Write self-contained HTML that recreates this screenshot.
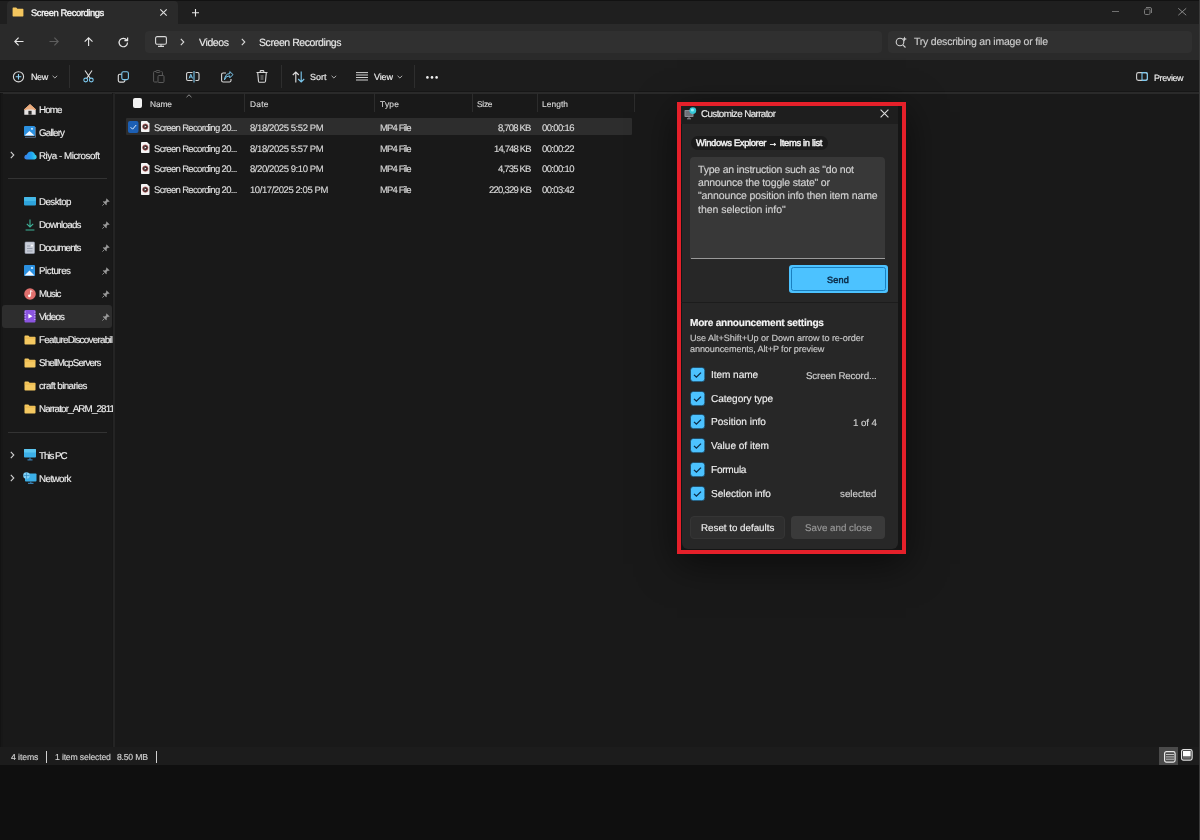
<!DOCTYPE html>
<html><head><meta charset="utf-8">
<style>
*{margin:0;padding:0;box-sizing:border-box}
html,body{width:1200px;height:840px;overflow:hidden;background:#0f0f0f}
body{font-family:"Liberation Sans",sans-serif;color:#e6e6e6;position:relative}
.a{position:absolute}
.t{position:absolute;white-space:nowrap;line-height:1;will-change:transform;text-rendering:geometricPrecision;-webkit-text-stroke:0.15px currentColor}
svg{position:absolute;overflow:visible}
</style></head>
<body>

<div class="a" style="left:0px;top:0px;width:1199px;height:765px;background:#191919;"></div>
<div class="a" style="left:0px;top:0px;width:1199px;height:24px;background:#1f1f1f;"></div>
<div class="a" style="left:0px;top:0px;width:1200px;height:1px;background:#121212;"></div>
<div class="a" style="left:7px;top:1px;width:171px;height:24px;background:#2a2a2a;border-radius:4px 4px 0 0"></div>
<div class="a" style="left:0px;top:24px;width:1199px;height:36px;background:#2a2a2a;"></div>
<div class="a" style="left:145px;top:30.5px;width:737px;height:22.5px;background:#303030;border-radius:4px"></div>
<div class="a" style="left:888px;top:31px;width:304px;height:21.5px;background:#303030;border-radius:4px"></div>
<div class="a" style="left:0px;top:60px;width:1199px;height:32px;background:#1c1c1c;"></div>
<div class="a" style="left:0px;top:91px;width:1199px;height:1px;background:#161616;"></div>
<div class="a" style="left:0px;top:92px;width:1199px;height:1.6px;background:#2a2a2a;"></div>
<div class="a" style="left:112px;top:93px;width:1px;height:654px;background:#171717;"></div>
<div class="a" style="left:113px;top:93px;width:2px;height:654px;background:#242424;"></div>
<div class="a" style="left:0px;top:93px;width:1px;height:654px;background:#131313;"></div>
<div class="a" style="left:1px;top:93px;width:2px;height:654px;background:#171717;"></div>
<div class="a" style="left:0px;top:747px;width:1199px;height:18px;background:#1c1c1c;"></div>
<div class="a" style="left:1199px;top:0px;width:1px;height:840px;background:#3a3a3a;"></div>
<svg style="left:12px;top:7px;" width="12" height="10" viewBox="0 0 12 10"><path d="M0.6 1.2 Q0.6 0.6 1.2 0.6 H4.2 L5.4 1.8 H10.8 Q11.4 1.8 11.4 2.4 V9 Q11.4 9.4 10.8 9.4 H1.2 Q0.6 9.4 0.6 9 Z" fill="#f4c65e"/></svg>
<div class="t" style="left:31.00px;top:8px;font-size:9.4px;color:#f4f4f4;letter-spacing:-0.403px;-webkit-text-stroke:0.35px #f4f4f4;">Screen Recordings</div>
<svg style="left:160px;top:9px;" width="7" height="7" viewBox="0 0 7 7"><path d="M0.3 0.3 L6.7 6.7 M6.7 0.3 L0.3 6.7" stroke="#e0e0e0" stroke-width="1.1"/></svg>
<svg style="left:192px;top:9px;" width="7" height="7" viewBox="0 0 7 7"><path d="M3.5 0 V7.5 M0 3.7 H7" stroke="#e8e8e8" stroke-width="1.1"/></svg>
<div class="a" style="left:1111.5px;top:10.5px;width:7.5px;height:1px;background:#707070;"></div>
<svg style="left:1144px;top:7px;" width="8" height="8" viewBox="0 0 8 8"><rect x="0.5" y="2" width="5.5" height="5.5" rx="1.3" fill="none" stroke="#7a7a7a" stroke-width="1"/><path d="M2 0.5 H6 Q7.5 0.5 7.5 2 V6" fill="none" stroke="#7a7a7a" stroke-width="1"/></svg>
<svg style="left:1178px;top:7.5px;" width="8.5" height="7.5" viewBox="0 0 8.5 7.5"><path d="M0.3 0.3 L8.2 7.2 M8.2 0.3 L0.3 7.2" stroke="#888" stroke-width="1"/></svg>
<svg style="left:14px;top:37px;" width="10" height="9" viewBox="0 0 10 9"><path d="M9.5 4.5 H0.8 M4.6 0.6 L0.8 4.5 L4.6 8.4" fill="none" stroke="#e8e8e8" stroke-width="1.1"/></svg>
<svg style="left:49px;top:37px;" width="10" height="9" viewBox="0 0 10 9"><path d="M0.5 4.5 H9.2 M5.4 0.6 L9.2 4.5 L5.4 8.4" fill="none" stroke="#5e5e5e" stroke-width="1.1"/></svg>
<svg style="left:84px;top:37px;" width="10" height="9" viewBox="0 0 10 9"><path d="M4.6 9 V0.8 M0.7 4.6 L4.6 0.8 L8.5 4.6" fill="none" stroke="#e8e8e8" stroke-width="1.1"/></svg>
<svg style="left:118px;top:37px;" width="11" height="10" viewBox="0 0 11 10"><path d="M8.8 3.2 A4.2 4.2 0 1 0 9.5 5.5" fill="none" stroke="#e8e8e8" stroke-width="1.2"/><path d="M9.6 0.5 V3.6 H6.4" fill="none" stroke="#e8e8e8" stroke-width="1.2"/></svg>
<svg style="left:155px;top:36px;" width="12" height="11" viewBox="0 0 12 11"><rect x="0.6" y="0.6" width="10.8" height="7.6" rx="1.5" fill="none" stroke="#d8d8d8" stroke-width="1.1"/><path d="M3 10.4 H9 M6 8.2 V10.4" stroke="#d8d8d8" stroke-width="1.1"/></svg>
<svg style="left:180px;top:38px;" width="5" height="8" viewBox="0 0 5 8"><path d="M0.8 0.8 L3.8 4 L0.8 7.2" fill="none" stroke="#d8d8d8" stroke-width="1.1"/></svg>
<div class="t" style="left:198.50px;top:38px;font-size:10.5px;color:#e8e8e8;letter-spacing:-0.383px;">Videos</div>
<svg style="left:241px;top:38px;" width="5" height="8" viewBox="0 0 5 8"><path d="M0.8 0.8 L3.8 4 L0.8 7.2" fill="none" stroke="#d8d8d8" stroke-width="1.1"/></svg>
<div class="t" style="left:258.50px;top:38px;font-size:10.5px;color:#e8e8e8;letter-spacing:-0.425px;">Screen Recordings</div>
<svg style="left:895px;top:36px;" width="13" height="12" viewBox="0 0 13 12"><circle cx="5" cy="6" r="3.8" fill="none" stroke="#d0d0d0" stroke-width="1.1"/><path d="M7.8 8.8 L10.5 11.5" stroke="#d0d0d0" stroke-width="1.1"/><path d="M9.5 0.5 L10.2 2.3 L12 3 L10.2 3.7 L9.5 5.5 L8.8 3.7 L7 3 L8.8 2.3 Z" fill="#d0d0d0"/></svg>
<div class="t" style="left:914.00px;top:37px;font-size:10.5px;color:#cccccc;letter-spacing:-0.208px;">Try describing an image or file</div>
<svg style="left:12px;top:71px;" width="13" height="12" viewBox="0 0 13 12"><circle cx="6.5" cy="5.8" r="5.1" fill="none" stroke="#d8d8d8" stroke-width="1.1"/><path d="M6.5 3 V8.6 M3.7 5.8 H9.3" stroke="#8fd3f5" stroke-width="1.1"/></svg>
<div class="t" style="left:30.70px;top:73px;font-size:9.0px;color:#eeeeee;letter-spacing:-0.402px;">New</div>
<svg style="left:52px;top:75px;" width="6" height="4" viewBox="0 0 6 4"><path d="M0.6 0.8 L2.9 3 L5.2 0.8" fill="none" stroke="#bbb" stroke-width="0.9"/></svg>
<div class="a" style="left:69px;top:65px;width:1px;height:23px;background:#2e2e2e;"></div>
<svg style="left:83px;top:70px;" width="11" height="13" viewBox="0 0 11 13"><path d="M2 0.5 L7.2 8.2 M9 0.5 L3.8 8.2" stroke="#e0e0e0" stroke-width="1.1"/><circle cx="2.7" cy="10" r="1.9" fill="none" stroke="#7cc8ee" stroke-width="1.1"/><circle cx="8.3" cy="10" r="1.9" fill="none" stroke="#7cc8ee" stroke-width="1.1"/></svg>
<svg style="left:117px;top:71px;" width="13" height="12" viewBox="0 0 13 12"><rect x="1.3" y="3.3" width="6.6" height="7.8" rx="1.5" fill="none" stroke="#e0e0e0" stroke-width="1.1"/><rect x="4.8" y="0.8" width="6.6" height="7.8" rx="1.5" fill="#1c1c1c" stroke="#7cc8ee" stroke-width="1.1"/></svg>
<svg style="left:153px;top:70px;" width="12" height="13" viewBox="0 0 12 13"><path d="M3 1.5 H1.5 Q0.6 1.5 0.6 2.5 V11 Q0.6 12 1.5 12 H4.5" fill="none" stroke="#5a5a5a" stroke-width="1"/><rect x="3" y="0.5" width="4" height="2" rx="0.8" fill="none" stroke="#5a5a5a" stroke-width="0.9"/><path d="M8.5 1.5 Q9.4 1.5 9.4 2.5 V5" fill="none" stroke="#5a5a5a" stroke-width="1"/><rect x="5" y="5.5" width="6" height="7" rx="1" fill="none" stroke="#5a5a5a" stroke-width="1"/></svg>
<svg style="left:186px;top:71px;" width="14" height="12" viewBox="0 0 14 12"><path d="M6.5 1.5 H2 Q0.6 1.5 0.6 3 V8 Q0.6 9.5 2 9.5 H6.5" fill="none" stroke="#d8d8d8" stroke-width="1.1"/><path d="M9.5 1.5 H11.5 Q13 1.5 13 3 V8 Q13 9.5 11.5 9.5 H9.5" fill="none" stroke="#d8d8d8" stroke-width="1.1"/><path d="M8 0 V11.5" stroke="#7cc8ee" stroke-width="1.1"/><path d="M3 7.5 L4.8 3.3 L6.6 7.5 M3.7 6 H5.9" fill="none" stroke="#7cc8ee" stroke-width="1"/></svg>
<svg style="left:221px;top:71px;" width="13" height="12" viewBox="0 0 13 12"><path d="M5 2 H2.2 Q0.6 2 0.6 3.6 V9.4 Q0.6 11 2.2 11 H8.4 Q10 11 10 9.4 V8" fill="none" stroke="#d8d8d8" stroke-width="1.1"/><path d="M3.5 8.8 Q4.5 4.8 8.8 4.8 V6.8 L12 3.6 L8.8 0.6 V2.6 Q4 2.8 3.5 8.8 Z" fill="none" stroke="#7cc8ee" stroke-width="1"/></svg>
<svg style="left:256px;top:70px;" width="12" height="13" viewBox="0 0 12 13"><path d="M0.5 2.5 H11.5 M4.2 2.5 V1.3 Q4.2 0.6 5 0.6 H7 Q7.8 0.6 7.8 1.3 V2.5 M1.7 2.5 L2.5 11.3 Q2.6 12.3 3.6 12.3 H8.4 Q9.4 12.3 9.5 11.3 L10.3 2.5" fill="none" stroke="#d8d8d8" stroke-width="1.1"/><rect x="4.5" y="5" width="3" height="5" fill="#555"/></svg>
<div class="a" style="left:281px;top:65px;width:1px;height:23px;background:#2e2e2e;"></div>
<svg style="left:292px;top:71px;" width="13" height="12" viewBox="0 0 13 12"><path d="M3.8 11.5 V1 M0.8 4 L3.8 1 L6.8 4" fill="none" stroke="#e0e0e0" stroke-width="1.1"/><path d="M9.2 0.5 V11 M6.2 8 L9.2 11 L12.2 8" fill="none" stroke="#7cc8ee" stroke-width="1.1"/></svg>
<div class="t" style="left:310.00px;top:73px;font-size:9.0px;color:#eeeeee;letter-spacing:-0.002px;">Sort</div>
<svg style="left:331px;top:75px;" width="6" height="4" viewBox="0 0 6 4"><path d="M0.6 0.8 L2.9 3 L5.2 0.8" fill="none" stroke="#bbb" stroke-width="0.9"/></svg>
<svg style="left:356px;top:72px;" width="12" height="9" viewBox="0 0 12 9"><path d="M0 0.6 H12 M0 3 H12 M0 5.5 H12 M0 8 H12" stroke="#d0d0d0" stroke-width="1"/></svg>
<div class="t" style="left:373.75px;top:73px;font-size:9.0px;color:#eeeeee;letter-spacing:-0.115px;">View</div>
<svg style="left:397px;top:75px;" width="6" height="4" viewBox="0 0 6 4"><path d="M0.6 0.8 L2.9 3 L5.2 0.8" fill="none" stroke="#bbb" stroke-width="0.9"/></svg>
<div class="a" style="left:414px;top:65px;width:1px;height:23px;background:#2e2e2e;"></div>
<svg style="left:426px;top:76px;" width="12" height="3" viewBox="0 0 12 3"><circle cx="1.4" cy="1.4" r="1.3" fill="#f0f0f0"/><circle cx="6" cy="1.4" r="1.3" fill="#f0f0f0"/><circle cx="10.6" cy="1.4" r="1.3" fill="#f0f0f0"/></svg>
<svg style="left:1136px;top:72px;" width="12" height="9" viewBox="0 0 12 9"><rect x="0.6" y="0.6" width="10.8" height="7.8" rx="1.8" fill="none" stroke="#d0d0d0" stroke-width="1.1"/><path d="M6 0.6 V8.4" stroke="#7cc8ee" stroke-width="1.1"/><path d="M6 0.6 H9.6 Q11.4 0.6 11.4 2.4 V6.6 Q11.4 8.4 9.6 8.4 H6" fill="none" stroke="#7cc8ee" stroke-width="1.1"/></svg>
<div class="t" style="left:1154.20px;top:74px;font-size:9.0px;color:#eeeeee;letter-spacing:-0.402px;">Preview</div>
<div class="a" style="left:2px;top:305px;width:110px;height:23px;background:#2d2d2d;border-radius:3px"></div>
<svg style="left:24px;top:104px;" width="12" height="11" viewBox="0 0 12 11"><path d="M6 0.3 L11.7 5.2 V10.7 H0.3 V5.2 Z" fill="#e6e3e3"/><path d="M6 0.3 L11.9 5.4 L11 6.2 L6 1.9 L1 6.2 L0.1 5.4 Z" fill="#e89a64"/><path d="M6 0.3 L11.9 5.4 H0.1 Z" fill="#eba878" opacity="0.9"/><rect x="4.4" y="6.8" width="3.2" height="3.9" fill="#2a2a2a"/></svg>
<div class="t" style="left:38.50px;top:106px;font-size:9.8px;color:#ececec;letter-spacing:-0.880px;">Home</div>
<svg style="left:24px;top:126px;" width="12" height="12" viewBox="0 0 12 12"><rect x="0" y="0" width="11" height="10" rx="1" fill="#2b90e0"/><path d="M0.5 9.5 L5.5 5 L10.5 9.5 Z" fill="#f2f8ff"/><circle cx="8" cy="2.8" r="1.1" fill="#bfe6ff"/><path d="M1 11.3 H11.5 V1" fill="none" stroke="#6a7f9a" stroke-width="0.8"/></svg>
<div class="t" style="left:38.50px;top:129px;font-size:9.8px;color:#ececec;letter-spacing:-0.840px;">Gallery</div>
<svg style="left:10px;top:151px;" width="5" height="8" viewBox="0 0 5 8"><path d="M0.8 0.8 L3.8 4 L0.8 7.2" fill="none" stroke="#d0d0d0" stroke-width="1.1"/></svg>
<svg style="left:23.5px;top:150.5px;" width="13" height="9" viewBox="0 0 13 9"><defs><linearGradient id="od" x1="0" y1="0" x2="1" y2="0"><stop offset="0" stop-color="#3f7fe8"/><stop offset="0.55" stop-color="#1fa0f0"/><stop offset="1" stop-color="#3ad6ec"/></linearGradient></defs><path d="M2.8 8.4 Q0.2 8.4 0.3 6 Q0.5 3.8 2.9 3.6 Q4 0.3 7.2 0.4 Q10.2 0.6 10.9 3.6 Q12.8 4.2 12.7 6.3 Q12.5 8.4 10.5 8.4 Z" fill="url(#od)"/></svg>
<div class="t" style="left:38.50px;top:152px;font-size:9.8px;color:#ececec;letter-spacing:-0.471px;">Riya - Microsoft</div>
<div class="a" style="left:8px;top:178px;width:99px;height:1px;background:#333333;"></div>
<svg style="left:24px;top:197px;" width="12" height="9" viewBox="0 0 12 9"><rect x="0" y="0" width="12" height="8.6" rx="1" fill="#2ea4dc"/><rect x="0" y="0" width="12" height="4" rx="1" fill="#45b9e8"/></svg>
<div class="t" style="left:38.50px;top:198px;font-size:9.8px;color:#ececec;letter-spacing:-0.575px;">Desktop</div>
<svg style="left:102px;top:197.5px;" width="8" height="8" viewBox="0 0 8 8"><path d="M4.6 0.4 L7.6 3.4 L6.9 4 L6 3.6 L4.6 5 L4.8 6.6 L4.2 7.2 L0.8 3.8 L1.4 3.2 L3 3.4 L4.4 2 L4 1.1 Z" fill="#9a9a9a"/><path d="M2.2 5.8 L0.4 7.6" stroke="#9a9a9a" stroke-width="0.9"/></svg>
<svg style="left:25px;top:219px;" width="10" height="12" viewBox="0 0 10 12"><path d="M5 0.5 V7.8 M1.8 4.8 L5 8 L8.2 4.8 M0.6 11 H9.4" fill="none" stroke="#3fb39a" stroke-width="1.1"/></svg>
<div class="t" style="left:38.50px;top:221px;font-size:9.8px;color:#ececec;letter-spacing:-0.747px;">Downloads</div>
<svg style="left:102px;top:220.5px;" width="8" height="8" viewBox="0 0 8 8"><path d="M4.6 0.4 L7.6 3.4 L6.9 4 L6 3.6 L4.6 5 L4.8 6.6 L4.2 7.2 L0.8 3.8 L1.4 3.2 L3 3.4 L4.4 2 L4 1.1 Z" fill="#9a9a9a"/><path d="M2.2 5.8 L0.4 7.6" stroke="#9a9a9a" stroke-width="0.9"/></svg>
<svg style="left:25px;top:242px;" width="10" height="12" viewBox="0 0 10 12"><rect x="0" y="0" width="9.5" height="11.5" rx="0.8" fill="#c8cdd8"/><rect x="0" y="0" width="9.5" height="11.5" rx="0.8" fill="none" stroke="#9aa3b3" stroke-width="0.6"/><path d="M2 4 H5 M2 6.5 H7.5 M2 9 H7.5" stroke="#8a93a3" stroke-width="0.8"/><circle cx="7" cy="3.5" r="1" fill="#ffffff"/></svg>
<div class="t" style="left:38.50px;top:244px;font-size:9.8px;color:#ececec;letter-spacing:-0.883px;">Documents</div>
<svg style="left:102px;top:243.5px;" width="8" height="8" viewBox="0 0 8 8"><path d="M4.6 0.4 L7.6 3.4 L6.9 4 L6 3.6 L4.6 5 L4.8 6.6 L4.2 7.2 L0.8 3.8 L1.4 3.2 L3 3.4 L4.4 2 L4 1.1 Z" fill="#9a9a9a"/><path d="M2.2 5.8 L0.4 7.6" stroke="#9a9a9a" stroke-width="0.9"/></svg>
<svg style="left:24px;top:265px;" width="12" height="12" viewBox="0 0 12 12"><rect x="0" y="0" width="11" height="11" rx="1" fill="#2b90e0"/><path d="M0.5 10.5 L5.5 5.5 L10.5 10.5 Z" fill="#f2f8ff"/><circle cx="8" cy="3" r="1.1" fill="#cfeaff"/></svg>
<div class="t" style="left:38.50px;top:267px;font-size:9.8px;color:#ececec;letter-spacing:-0.486px;">Pictures</div>
<svg style="left:102px;top:266.5px;" width="8" height="8" viewBox="0 0 8 8"><path d="M4.6 0.4 L7.6 3.4 L6.9 4 L6 3.6 L4.6 5 L4.8 6.6 L4.2 7.2 L0.8 3.8 L1.4 3.2 L3 3.4 L4.4 2 L4 1.1 Z" fill="#9a9a9a"/><path d="M2.2 5.8 L0.4 7.6" stroke="#9a9a9a" stroke-width="0.9"/></svg>
<svg style="left:24px;top:288px;" width="12" height="12" viewBox="0 0 12 12"><circle cx="6" cy="6" r="5.8" fill="#e0706e"/><path d="M6.6 2.6 V7.6 M6.6 2.6 L8.4 3.6" fill="none" stroke="#fff" stroke-width="0.9"/><circle cx="5.4" cy="7.8" r="1.4" fill="#fff"/></svg>
<div class="t" style="left:38.50px;top:290px;font-size:9.8px;color:#ececec;letter-spacing:-0.773px;">Music</div>
<svg style="left:102px;top:289.5px;" width="8" height="8" viewBox="0 0 8 8"><path d="M4.6 0.4 L7.6 3.4 L6.9 4 L6 3.6 L4.6 5 L4.8 6.6 L4.2 7.2 L0.8 3.8 L1.4 3.2 L3 3.4 L4.4 2 L4 1.1 Z" fill="#9a9a9a"/><path d="M2.2 5.8 L0.4 7.6" stroke="#9a9a9a" stroke-width="0.9"/></svg>
<svg style="left:24px;top:310px;" width="12" height="13" viewBox="0 0 12 13"><rect x="0.5" y="0" width="11" height="12.5" rx="1" fill="#8b55e0"/><path d="M0.5 2 H2 M0.5 4.5 H2 M0.5 7 H2 M0.5 9.5 H2 M10 2 H11.5 M10 4.5 H11.5 M10 7 H11.5 M10 9.5 H11.5" stroke="#c6a8ff" stroke-width="0.9"/><path d="M4.4 3.8 L8.4 6.2 L4.4 8.6 Z" fill="#ffffff"/></svg>
<div class="t" style="left:38.50px;top:313px;font-size:9.8px;color:#ececec;letter-spacing:-0.757px;">Videos</div>
<svg style="left:102px;top:312.5px;" width="8" height="8" viewBox="0 0 8 8"><path d="M4.6 0.4 L7.6 3.4 L6.9 4 L6 3.6 L4.6 5 L4.8 6.6 L4.2 7.2 L0.8 3.8 L1.4 3.2 L3 3.4 L4.4 2 L4 1.1 Z" fill="#9a9a9a"/><path d="M2.2 5.8 L0.4 7.6" stroke="#9a9a9a" stroke-width="0.9"/></svg>
<svg style="left:24px;top:334.5px;" width="12" height="10" viewBox="0 0 12 10"><path d="M0.5 1.3 Q0.5 0.5 1.3 0.5 H4.3 L5.5 1.7 H10.7 Q11.5 1.7 11.5 2.5 V8.7 Q11.5 9.5 10.7 9.5 H1.3 Q0.5 9.5 0.5 8.7 Z" fill="#f5c961"/><path d="M0.5 3 H11.5" stroke="#e0a93a" stroke-width="0.6"/></svg>
<div class="t" style="left:38.50px;top:336px;font-size:9.8px;color:#ececec;letter-spacing:-0.730px;width:73.5px;overflow:hidden;">FeatureDiscoverabil</div>
<svg style="left:24px;top:357.5px;" width="12" height="10" viewBox="0 0 12 10"><path d="M0.5 1.3 Q0.5 0.5 1.3 0.5 H4.3 L5.5 1.7 H10.7 Q11.5 1.7 11.5 2.5 V8.7 Q11.5 9.5 10.7 9.5 H1.3 Q0.5 9.5 0.5 8.7 Z" fill="#f5c961"/><path d="M0.5 3 H11.5" stroke="#e0a93a" stroke-width="0.6"/></svg>
<div class="t" style="left:38.50px;top:359px;font-size:9.8px;color:#ececec;letter-spacing:-0.826px;width:73.5px;overflow:hidden;">ShellMcpServers</div>
<svg style="left:24px;top:380.5px;" width="12" height="10" viewBox="0 0 12 10"><path d="M0.5 1.3 Q0.5 0.5 1.3 0.5 H4.3 L5.5 1.7 H10.7 Q11.5 1.7 11.5 2.5 V8.7 Q11.5 9.5 10.7 9.5 H1.3 Q0.5 9.5 0.5 8.7 Z" fill="#f5c961"/><path d="M0.5 3 H11.5" stroke="#e0a93a" stroke-width="0.6"/></svg>
<div class="t" style="left:38.50px;top:382px;font-size:9.8px;color:#ececec;letter-spacing:-0.585px;width:73.5px;overflow:hidden;">craft binaries</div>
<svg style="left:24px;top:403.5px;" width="12" height="10" viewBox="0 0 12 10"><path d="M0.5 1.3 Q0.5 0.5 1.3 0.5 H4.3 L5.5 1.7 H10.7 Q11.5 1.7 11.5 2.5 V8.7 Q11.5 9.5 10.7 9.5 H1.3 Q0.5 9.5 0.5 8.7 Z" fill="#f5c961"/><path d="M0.5 3 H11.5" stroke="#e0a93a" stroke-width="0.6"/></svg>
<div class="t" style="left:38.50px;top:405px;font-size:9.8px;color:#ececec;letter-spacing:-0.856px;width:73.5px;overflow:hidden;">Narrator_ARM_2811</div>
<div class="a" style="left:8px;top:432px;width:99px;height:1px;background:#333333;"></div>
<svg style="left:10px;top:451px;" width="5" height="8" viewBox="0 0 5 8"><path d="M0.8 0.8 L3.8 4 L0.8 7.2" fill="none" stroke="#d0d0d0" stroke-width="1.1"/></svg>
<svg style="left:24px;top:449px;" width="12" height="12" viewBox="0 0 12 12"><rect x="0" y="0" width="12" height="8.5" rx="0.8" fill="#3cb0e8"/><rect x="0" y="0" width="12" height="3.5" rx="0.8" fill="#5cc6f0"/><path d="M3.5 10.8 H8.5 M6 8.5 V10.8" stroke="#3a7fb0" stroke-width="1.2"/></svg>
<div class="t" style="left:38.50px;top:452px;font-size:9.8px;color:#ececec;letter-spacing:-1.058px;">This PC</div>
<svg style="left:10px;top:474px;" width="5" height="8" viewBox="0 0 5 8"><path d="M0.8 0.8 L3.8 4 L0.8 7.2" fill="none" stroke="#d0d0d0" stroke-width="1.1"/></svg>
<svg style="left:23px;top:472px;" width="14" height="12" viewBox="0 0 14 12"><rect x="2" y="1.5" width="11.5" height="8" rx="0.8" fill="#3cb0e8"/><path d="M5 11.3 H10.5 M7.8 9.5 V11.3" stroke="#3a7fb0" stroke-width="1.2"/><circle cx="3.5" cy="3.5" r="3.3" fill="#7fd0f6"/><path d="M0.5 3.5 H6.5 M3.5 0.3 V6.7" stroke="#2a80b8" stroke-width="0.6"/></svg>
<div class="t" style="left:38.50px;top:475px;font-size:9.8px;color:#ececec;letter-spacing:-0.573px;">Network</div>
<div class="a" style="left:133px;top:98px;width:9px;height:10px;background:#f2f2f2;border-radius:2px"></div>
<svg style="left:186px;top:94px;" width="6" height="4" viewBox="0 0 6 4"><path d="M0.5 3.2 L3 0.8 L5.5 3.2" fill="none" stroke="#9a9a9a" stroke-width="0.9"/></svg>
<div class="t" style="left:150.00px;top:100px;font-size:8.4px;color:#d4d4d4;letter-spacing:-0.135px;">Name</div>
<div class="a" style="left:244px;top:93px;width:1px;height:19px;background:#2c2c2c;"></div>
<div class="a" style="left:374px;top:93px;width:1px;height:19px;background:#2c2c2c;"></div>
<div class="a" style="left:472px;top:93px;width:1px;height:19px;background:#2c2c2c;"></div>
<div class="a" style="left:537px;top:93px;width:1px;height:19px;background:#2c2c2c;"></div>
<div class="a" style="left:634px;top:93px;width:1px;height:19px;background:#2c2c2c;"></div>
<div class="t" style="left:250.00px;top:100px;font-size:8.4px;color:#d4d4d4;letter-spacing:0.252px;">Date</div>
<div class="t" style="left:380.00px;top:100px;font-size:8.4px;color:#d4d4d4;letter-spacing:0.263px;">Type</div>
<div class="t" style="left:477.00px;top:100px;font-size:8.4px;color:#d4d4d4;letter-spacing:-0.280px;">Size</div>
<div class="t" style="left:542.00px;top:100px;font-size:8.4px;color:#d4d4d4;letter-spacing:0.061px;">Length</div>
<div class="a" style="left:126px;top:117.5px;width:506px;height:17.3px;background:#2d2d2d;border-radius:1px"></div>
<svg style="left:128px;top:121px;" width="11" height="12" viewBox="0 0 11 12"><rect x="0" y="0" width="10.5" height="12" rx="2" fill="#1c5fb4"/><path d="M2.6 6.2 L4.6 8.2 L8.2 4" fill="none" stroke="#dbeeff" stroke-width="1"/></svg>
<svg style="left:141px;top:121px;" width="9" height="11" viewBox="0 0 9 11"><path d="M0 0.8 Q0 0 0.8 0 H6 L8.5 2.5 V10.2 Q8.5 11 7.7 11 H0.8 Q0 11 0 10.2 Z" fill="#f4f4f4"/><circle cx="4.3" cy="5.6" r="2.7" fill="#3a2a2a"/><circle cx="4.3" cy="5.6" r="2.7" fill="none" stroke="#c05050" stroke-width="0.6"/><path d="M3.6 4.4 L5.5 5.6 L3.6 6.8 Z" fill="#f4f4f4"/></svg>
<div class="t" style="left:153.60px;top:124px;font-size:9.5px;color:#dedede;letter-spacing:-0.655px;">Screen Recording 20...</div>
<div class="t" style="left:249.80px;top:124px;font-size:9.5px;color:#d8d8d8;letter-spacing:-0.417px;">8/18/2025 5:52 PM</div>
<div class="t" style="left:380.00px;top:124px;font-size:9.5px;color:#d8d8d8;letter-spacing:-0.840px;">MP4 File</div>
<div class="t" style="left:498.40px;top:124px;font-size:9.5px;color:#d8d8d8;letter-spacing:-0.812px;">8,708 KB</div>
<div class="t" style="left:542.00px;top:124px;font-size:9.5px;color:#d8d8d8;letter-spacing:-0.639px;">00:00:16</div>
<svg style="left:141px;top:142px;" width="9" height="11" viewBox="0 0 9 11"><path d="M0 0.8 Q0 0 0.8 0 H6 L8.5 2.5 V10.2 Q8.5 11 7.7 11 H0.8 Q0 11 0 10.2 Z" fill="#f4f4f4"/><circle cx="4.3" cy="5.6" r="2.7" fill="#3a2a2a"/><circle cx="4.3" cy="5.6" r="2.7" fill="none" stroke="#c05050" stroke-width="0.6"/><path d="M3.6 4.4 L5.5 5.6 L3.6 6.8 Z" fill="#f4f4f4"/></svg>
<div class="t" style="left:153.60px;top:145px;font-size:9.5px;color:#dedede;letter-spacing:-0.655px;">Screen Recording 20...</div>
<div class="t" style="left:249.80px;top:145px;font-size:9.5px;color:#d8d8d8;letter-spacing:-0.417px;">8/18/2025 5:57 PM</div>
<div class="t" style="left:380.00px;top:145px;font-size:9.5px;color:#d8d8d8;letter-spacing:-0.840px;">MP4 File</div>
<div class="t" style="left:494.30px;top:145px;font-size:9.5px;color:#d8d8d8;letter-spacing:-0.858px;">14,748 KB</div>
<div class="t" style="left:542.00px;top:145px;font-size:9.5px;color:#d8d8d8;letter-spacing:-0.639px;">00:00:22</div>
<svg style="left:141px;top:162.5px;" width="9" height="11" viewBox="0 0 9 11"><path d="M0 0.8 Q0 0 0.8 0 H6 L8.5 2.5 V10.2 Q8.5 11 7.7 11 H0.8 Q0 11 0 10.2 Z" fill="#f4f4f4"/><circle cx="4.3" cy="5.6" r="2.7" fill="#3a2a2a"/><circle cx="4.3" cy="5.6" r="2.7" fill="none" stroke="#c05050" stroke-width="0.6"/><path d="M3.6 4.4 L5.5 5.6 L3.6 6.8 Z" fill="#f4f4f4"/></svg>
<div class="t" style="left:153.60px;top:165px;font-size:9.5px;color:#dedede;letter-spacing:-0.655px;">Screen Recording 20...</div>
<div class="t" style="left:249.80px;top:165px;font-size:9.5px;color:#d8d8d8;letter-spacing:-0.417px;">8/20/2025 9:10 PM</div>
<div class="t" style="left:380.00px;top:165px;font-size:9.5px;color:#d8d8d8;letter-spacing:-0.840px;">MP4 File</div>
<div class="t" style="left:498.40px;top:165px;font-size:9.5px;color:#d8d8d8;letter-spacing:-0.812px;">4,735 KB</div>
<div class="t" style="left:542.00px;top:165px;font-size:9.5px;color:#d8d8d8;letter-spacing:-0.639px;">00:00:10</div>
<svg style="left:141px;top:183.5px;" width="9" height="11" viewBox="0 0 9 11"><path d="M0 0.8 Q0 0 0.8 0 H6 L8.5 2.5 V10.2 Q8.5 11 7.7 11 H0.8 Q0 11 0 10.2 Z" fill="#f4f4f4"/><circle cx="4.3" cy="5.6" r="2.7" fill="#3a2a2a"/><circle cx="4.3" cy="5.6" r="2.7" fill="none" stroke="#c05050" stroke-width="0.6"/><path d="M3.6 4.4 L5.5 5.6 L3.6 6.8 Z" fill="#f4f4f4"/></svg>
<div class="t" style="left:153.60px;top:186px;font-size:9.5px;color:#dedede;letter-spacing:-0.655px;">Screen Recording 20...</div>
<div class="t" style="left:249.80px;top:186px;font-size:9.5px;color:#d8d8d8;letter-spacing:-0.427px;">10/17/2025 2:05 PM</div>
<div class="t" style="left:380.00px;top:186px;font-size:9.5px;color:#d8d8d8;letter-spacing:-0.840px;">MP4 File</div>
<div class="t" style="left:488.90px;top:186px;font-size:9.5px;color:#d8d8d8;letter-spacing:-0.750px;">220,329 KB</div>
<div class="t" style="left:542.00px;top:186px;font-size:9.5px;color:#d8d8d8;letter-spacing:-0.639px;">00:03:42</div>
<div class="t" style="left:10.50px;top:753px;font-size:8.7px;color:#cfcfcf;letter-spacing:-0.090px;">4 items</div>
<div class="a" style="left:46px;top:751px;width:1px;height:12px;background:#d0d0d0;"></div>
<div class="t" style="left:55.00px;top:753px;font-size:8.7px;color:#cfcfcf;letter-spacing:-0.180px;">1 item selected</div>
<div class="t" style="left:117.00px;top:753px;font-size:8.7px;color:#cfcfcf;letter-spacing:-0.234px;">8.50 MB</div>
<div class="a" style="left:156px;top:751px;width:1px;height:12px;background:#d0d0d0;"></div>
<div class="a" style="left:1159px;top:747px;width:19px;height:18px;background:#4a4a4a;"></div>
<svg style="left:1164px;top:751px;" width="12" height="12" viewBox="0 0 12 12"><rect x="0.6" y="0.6" width="10.5" height="10.5" rx="1.8" fill="none" stroke="#e8e8e8" stroke-width="1.2"/><path d="M2 3.5 H10 M2 5.9 H10 M2 8.2 H10" stroke="#cfcfcf" stroke-width="0.9"/></svg>
<svg style="left:1181px;top:749px;" width="12" height="12" viewBox="0 0 12 12"><rect x="0.6" y="0.6" width="10.5" height="10.5" rx="1.8" fill="none" stroke="#e0e0e0" stroke-width="1.2"/><rect x="2" y="2" width="7.7" height="5.5" fill="#ffffff"/><rect x="2" y="7.8" width="7.7" height="2" fill="#6a6a6a"/></svg>
<div class="a" style="left:677px;top:102px;width:229px;height:452px;background:#151515;border:4.5px solid #e5202a;box-shadow:0 10px 36px rgba(0,0,0,0.55)"></div>
<div class="a" style="left:681.5px;top:106.5px;width:216.5px;height:442.5px;background:#272727;border-radius:0 0 6px 6px"></div>
<div class="a" style="left:681px;top:106px;width:217px;height:18px;background:#1e1e1e;"></div>
<svg style="left:684px;top:107px;" width="13" height="13" viewBox="0 0 13 13"><rect x="0.5" y="3" width="9" height="7" rx="0.8" fill="#8a8f96"/><rect x="1.5" y="4" width="7" height="5" fill="#6c7178"/><path d="M3 11.8 H7 M5 10 V11.8" stroke="#8a8f96" stroke-width="1"/><circle cx="8.8" cy="3.6" r="3.4" fill="#34c6d6"/><circle cx="8.4" cy="3" r="1.6" fill="#8ff0f6"/></svg>
<div class="t" style="left:700.75px;top:110px;font-size:9.8px;color:#ececec;letter-spacing:-0.586px;">Customize Narrator</div>
<svg style="left:880px;top:109px;" width="9" height="9" viewBox="0 0 9 9"><path d="M0.6 0.6 L8.4 8.4 M8.4 0.6 L0.6 8.4" stroke="#dcdcdc" stroke-width="1.1"/></svg>
<div class="a" style="left:690.5px;top:136px;width:137.5px;height:14px;background:#1b1b1b;border-radius:7px"></div>
<div class="t" style="left:696.00px;top:138px;font-size:9.4px;color:#f2f2f2;letter-spacing:-0.344px;-webkit-text-stroke:0.45px #f2f2f2;">Windows Explorer → Items in list</div>
<div class="a" style="left:690px;top:157px;width:195px;height:102px;background:#383838;border-radius:4px 4px 0 0"></div>
<div class="a" style="left:690.5px;top:257.8px;width:194px;height:1.4px;background:#9a9a9a;"></div>
<div class="t" style="left:698.00px;top:165px;font-size:10.5px;color:#d2d2d2;letter-spacing:-0.208px;">Type an instruction such as &quot;do not</div>
<div class="t" style="left:698.00px;top:178px;font-size:10.5px;color:#d2d2d2;letter-spacing:-0.172px;">announce the toggle state&quot; or</div>
<div class="t" style="left:698.00px;top:191px;font-size:10.5px;color:#d2d2d2;letter-spacing:-0.121px;">&quot;announce position info then item name</div>
<div class="t" style="left:698.00px;top:205px;font-size:10.5px;color:#d2d2d2;letter-spacing:-0.035px;">then selection info&quot;</div>
<div class="a" style="left:788.5px;top:265.2px;width:99px;height:28px;background:#4cc2ff;border-radius:3px"></div>
<div class="a" style="left:790.5px;top:267.2px;width:95px;height:24px;background:transparent;border:1px solid #1a7fbf;border-radius:2.5px"></div>
<div class="t" style="left:827.00px;top:276px;font-size:9.1px;color:#0b2d4a;letter-spacing:0.216px;-webkit-text-stroke:0.5px #0b2d4a;">Send</div>
<div class="a" style="left:681px;top:301.5px;width:217px;height:1.5px;background:#1c1c1c;"></div>
<div class="t" style="left:690.25px;top:319px;font-size:10.1px;color:#f4f4f4;letter-spacing:-0.252px;font-weight:bold;">More announcement settings</div>
<div class="t" style="left:690.00px;top:334px;font-size:9.1px;color:#c8c8c8;letter-spacing:-0.049px;">Use Alt+Shift+Up or Down arrow to re-order</div>
<div class="t" style="left:690.00px;top:345px;font-size:9.1px;color:#c8c8c8;letter-spacing:-0.119px;">announcements, Alt+P for preview</div>
<svg style="left:689.5px;top:367.09999999999997px;" width="15" height="15" viewBox="0 0 15 15"><rect x="0.5" y="0.4" width="14.3" height="14.3" rx="3" fill="#4cc2ff" stroke="#163a52" stroke-width="0.7"/><path d="M4 7.9 L6.4 10.2 L11 5.6" fill="none" stroke="#0b2a45" stroke-width="1.3"/></svg>
<div class="t" style="left:710.50px;top:371px;font-size:10.1px;color:#ececec;letter-spacing:-0.064px;">Item name</div>
<div class="t" style="left:805.80px;top:372px;font-size:9.8px;color:#cfcfcf;letter-spacing:-0.189px;">Screen Record...</div>
<svg style="left:689.5px;top:391.09999999999997px;" width="15" height="15" viewBox="0 0 15 15"><rect x="0.5" y="0.4" width="14.3" height="14.3" rx="3" fill="#4cc2ff" stroke="#163a52" stroke-width="0.7"/><path d="M4 7.9 L6.4 10.2 L11 5.6" fill="none" stroke="#0b2a45" stroke-width="1.3"/></svg>
<div class="t" style="left:710.50px;top:395px;font-size:10.1px;color:#ececec;letter-spacing:-0.057px;">Category type</div>
<svg style="left:689.5px;top:414.4px;" width="15" height="15" viewBox="0 0 15 15"><rect x="0.5" y="0.4" width="14.3" height="14.3" rx="3" fill="#4cc2ff" stroke="#163a52" stroke-width="0.7"/><path d="M4 7.9 L6.4 10.2 L11 5.6" fill="none" stroke="#0b2a45" stroke-width="1.3"/></svg>
<div class="t" style="left:710.50px;top:418px;font-size:10.1px;color:#ececec;letter-spacing:-0.002px;">Position info</div>
<div class="t" style="left:852.60px;top:419px;font-size:9.8px;color:#cfcfcf;letter-spacing:-0.124px;">1 of 4</div>
<svg style="left:689.5px;top:438.2px;" width="15" height="15" viewBox="0 0 15 15"><rect x="0.5" y="0.4" width="14.3" height="14.3" rx="3" fill="#4cc2ff" stroke="#163a52" stroke-width="0.7"/><path d="M4 7.9 L6.4 10.2 L11 5.6" fill="none" stroke="#0b2a45" stroke-width="1.3"/></svg>
<div class="t" style="left:710.50px;top:442px;font-size:10.1px;color:#ececec;letter-spacing:-0.017px;">Value of item</div>
<svg style="left:689.5px;top:461.59999999999997px;" width="15" height="15" viewBox="0 0 15 15"><rect x="0.5" y="0.4" width="14.3" height="14.3" rx="3" fill="#4cc2ff" stroke="#163a52" stroke-width="0.7"/><path d="M4 7.9 L6.4 10.2 L11 5.6" fill="none" stroke="#0b2a45" stroke-width="1.3"/></svg>
<div class="t" style="left:710.50px;top:466px;font-size:10.1px;color:#ececec;letter-spacing:-0.257px;">Formula</div>
<svg style="left:689.5px;top:485.7px;" width="15" height="15" viewBox="0 0 15 15"><rect x="0.5" y="0.4" width="14.3" height="14.3" rx="3" fill="#4cc2ff" stroke="#163a52" stroke-width="0.7"/><path d="M4 7.9 L6.4 10.2 L11 5.6" fill="none" stroke="#0b2a45" stroke-width="1.3"/></svg>
<div class="t" style="left:710.50px;top:490px;font-size:10.1px;color:#ececec;letter-spacing:-0.049px;">Selection info</div>
<div class="t" style="left:840.00px;top:490px;font-size:9.8px;color:#cfcfcf;">selected</div>
<div class="a" style="left:689.75px;top:515.5px;width:95px;height:23.2px;background:#2e2e2e;border-radius:4px;border:1px solid #353535"></div>
<div class="t" style="left:700.60px;top:524px;font-size:9.8px;color:#ececec;letter-spacing:-0.015px;">Reset to defaults</div>
<div class="a" style="left:791px;top:515.5px;width:94.2px;height:23.2px;background:#3a3a3a;border-radius:4px"></div>
<div class="t" style="left:804.50px;top:524px;font-size:9.8px;color:#999999;letter-spacing:-0.001px;">Save and close</div>
</body></html>
